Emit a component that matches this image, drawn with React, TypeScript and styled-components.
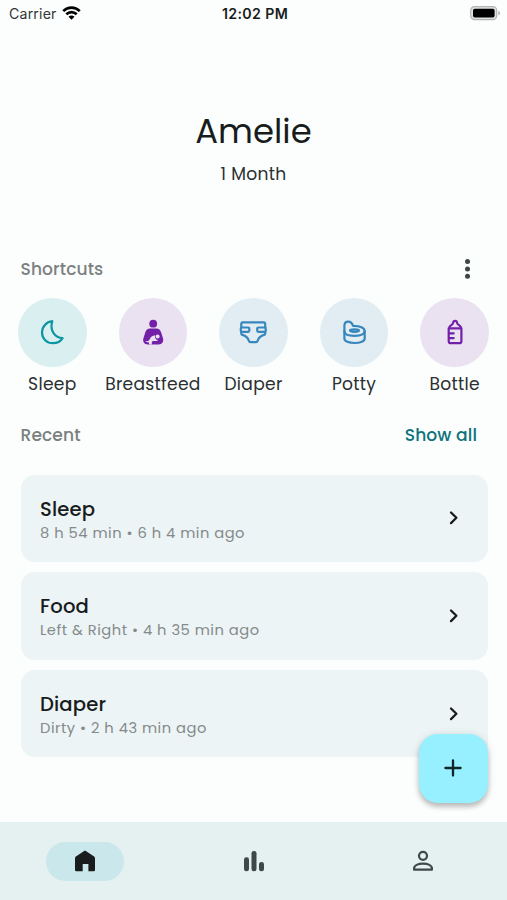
import React from "react";
import styled, { createGlobalStyle } from "styled-components";

const GlobalStyle = createGlobalStyle`
  * { box-sizing: border-box; }
  body {
    margin: 0;
    background: #fbfefd;
    font-family: Poppins, Inter, "Open Sans", sans-serif;
  }
`;

const Text = styled.span<{
  $size: number;
  $line: number;
  $spacing?: number;
  $weight?: number;
  $color?: string;
}>`
  display: block;
  white-space: nowrap;
  font-size: ${(p) => p.$size}px;
  line-height: ${(p) => p.$line}px;
  letter-spacing: ${(p) => p.$spacing ?? 0}px;
  font-weight: ${(p) => p.$weight ?? 400};
  color: ${(p) => p.$color ?? "#191c1d"};
`;

const Screen = styled.div`
  width: 507px;
  height: 900px;
  display: flex;
  flex-direction: column;
  overflow: hidden;
  background: #fbfefd;
`;

const StatusBar = styled.header`
  height: 28px;
  flex: none;
  display: grid;
  grid-template-columns: 1fr auto 1fr;
  align-items: center;
  padding: 0 6px 1px 9px;
  font-family: Inter, sans-serif;
`;

const Carrier = styled.div`
  display: flex;
  align-items: center;
  gap: 5px;
`;

const BatterySlot = styled.div`
  display: flex;
  justify-content: flex-end;
`;

const Profile = styled.section`
  height: 222px;
  flex: none;
  display: flex;
  flex-direction: column;
  align-items: center;
  padding-top: 82px;
`;

const SectionHead = styled.div`
  height: 38px;
  flex: none;
  display: flex;
  align-items: center;
  justify-content: space-between;
  padding: 0 30px 0 20.5px;
`;

const PlainButton = styled.button`
  border: 0;
  padding: 0;
  background: none;
  font: inherit;
  display: flex;
`;

const Shortcuts = styled.div`
  flex: none;
  height: 128px;
  display: grid;
  grid-template-columns: repeat(5, 1fr);
  padding: 10px 2px 0;
`;

const Shortcut = styled.div`
  display: flex;
  flex-direction: column;
  align-items: center;
  gap: 5px;
`;

const Bubble = styled.div<{ $bg: string; $fg: string }>`
  width: 68.6px;
  height: 68.6px;
  border-radius: 50%;
  display: flex;
  align-items: center;
  justify-content: center;
  background: ${(p) => p.$bg};
  color: ${(p) => p.$fg};
`;

const Cards = styled.div`
  flex: 1;
  display: flex;
  flex-direction: column;
  gap: 10.3px;
  padding: 20.5px 19.5px 0 20.5px;
`;

const Card = styled.article`
  height: 87.4px;
  flex: none;
  border-radius: 14px;
  background: #ecf4f5;
  display: flex;
  align-items: center;
  justify-content: space-between;
  padding: 0 28px 0 19.5px;
`;

const CardText = styled.div`
  padding-top: 4px;
`;

const BottomNav = styled.nav`
  position: relative;
  height: 78px;
  flex: none;
  background: #e5f0f0;
  display: grid;
  grid-template-columns: repeat(3, 1fr);
  align-items: center;
  justify-items: center;
`;

const NavPill = styled.div<{ $active?: boolean }>`
  width: 78px;
  height: 39px;
  border-radius: 20px;
  display: flex;
  align-items: center;
  justify-content: center;
  background: ${(p) => (p.$active ? "#cae7eb" : "transparent")};
`;

const Fab = styled.button`
  position: absolute;
  right: 19.5px;
  bottom: 97.5px;
  width: 69px;
  height: 69px;
  border: 0;
  padding: 0;
  border-radius: 19px;
  background: #97f0ff;
  box-shadow: 0 4px 5px rgba(0, 0, 0, 0.2), 0 1px 8px rgba(0, 0, 0, 0.13);
  display: flex;
  align-items: center;
  justify-content: center;
`;

const Line = styled.svg`
  display: block;
  fill: none;
  stroke: currentColor;
  stroke-linecap: round;
  stroke-linejoin: round;
`;

const WifiIcon = () => (
  <svg width="19" height="15" viewBox="0 0 19 15" fill="none" stroke="#000" strokeWidth="2.6">
    <path d="M1.2 5.1C6 .4 13 .4 17.8 5.1" />
    <path d="M4.3 8.300c3-2.900 7.400-2.900 10.400 0" />
    <path d="M9.500 13.800 6.500 10.800c1.800-1.600 4.200-1.600 6 0Z" fill="#000" stroke="none" />
  </svg>
);

const BatteryIcon = () => (
  <svg width="31" height="15" viewBox="0 0 31 15">
    <rect x=".7" y=".6" width="26" height="13" rx="3.800" fill="#dfe2e1" stroke="#b2b5b4" strokeWidth="1.2" />
    <rect x="3" y="2.700" width="21.600" height="8.800" rx="1.800" fill="#000" />
    <path d="M28.300 4.900c2.400.7 2.400 3.700 0 4.400Z" fill="#b2b5b4" />
  </svg>
);

const MoonIcon = () => (
  <Line width="68" height="68" viewBox="0 0 68 68" strokeWidth="2.2">
    <path d="M34.300 23.200C28.300 23.800 24 28.700 24 34.500 24 40.800 28.800 45.200 34.900 45.200c4.300 0 7.700-1.700 9.700-5.100C37.200 39.800 31.300 32.700 34.300 23.200Z" />
  </Line>
);

const BreastfeedIcon = ({ bg }: { bg: string }) => (
  <svg width="68" height="68" viewBox="0 0 68 68" fill="currentColor">
    <circle cx="34.200" cy="25.700" r="3.900" />
    <path d="M31 30.600h6.400c2.500 0 3.900 1.400 4.700 3.700l1.800 5.700c1.100 3.500-.6 6.400-4.300 6.400H28.800c-3.700 0-5.400-2.900-4.300-6.400l1.800-5.700c.8-2.300 2.200-3.700 4.700-3.700Z" />
    <circle cx="38.600" cy="38.400" r="2" fill={bg} />
    <path d="M36.100 37.300c-.5 2.600.5 4.400 2.900 4.900-1.500 1.100-3.300.9-4.800.9-1.200 0-1.700.9-1.300 3.400h-2.500l-.9-2.500c-1 .5-2.400.2-3.400-.6 2.700 0 4-.8 4.800-2.500.8-1.800 2.300-3.100 5.200-3.600Z" fill={bg} />
  </svg>
);

const DiaperIcon = () => (
  <Line width="68" height="68" viewBox="0 0 68 68" strokeWidth="2.200">
    <path d="M22.300 29.300v-3.500a1.500 1.500 0 0 1 1.500-1.500h20.900a1.500 1.500 0 0 1 1.500 1.500v3.500" />
    <path d="M22.600 29.500h6.500a1.200 1.200 0 0 1 1.200 1.200v1.900a1.200 1.200 0 0 1-1.200 1.200h-6.500a.8.8 0 0 1-.8-.8v-2.700a.8.8 0 0 1 .8-.8ZM45.900 29.500h-6.500a1.200 1.200 0 0 0-1.200 1.200v1.900a1.200 1.200 0 0 0 1.200 1.200h6.500a.8.8 0 0 0 .8-.8v-2.700a.8.8 0 0 0-.8-.8Z" />
    <path d="M22.300 33.900v1.500c0 .8.400 1.300 1.100 1.500 3.400 1 5.500 2.700 6.400 5.800.3.900.8 1.500 1.700 1.500h5.500c.9 0 1.400-.6 1.700-1.500.9-3.100 3-4.800 6.400-5.800.7-.2 1.100-.7 1.100-1.500v-1.500" />
  </Line>
);

const PottyIcon = () => (
  <Line width="68" height="68" viewBox="0 0 68 68" strokeWidth="2.200">
    <path d="M24.400 33.200v-5.300c0-2.800 1.600-4.300 3.900-4.300 2.600 0 4 2 4.800 4.300 7 .2 11.600 2.100 11.600 5.200 0 3-4.500 4.700-10.100 4.700s-10.200-1.600-10.200-4.600" />
    <path d="M24.400 33.200v7.500c0 2.600 4.400 4.300 10.200 4.300s10.100-1.900 10.100-4.500v-7.500" />
    <ellipse cx="34.500" cy="32.600" rx="4.500" ry="1.300" />
  </Line>
);

const BottleIcon = () => (
  <Line width="68" height="68" viewBox="0 0 68 68" strokeWidth="2.200">
    <path d="M27.700 30.300h12.700v12.900a2 2 0 0 1-2 2h-8.700a2 2 0 0 1-2-2ZM28.100 30c0-2.600 3.900-3 4-5 .1-1.100.8-2.100 2-2.100s1.900 1 2 2.100c.1 2 4 2.400 4 5M28 35.300h4.700M28 40.100h4.700" />
  </Line>
);

const ChevronIcon = () => (
  <Line width="12" height="16" viewBox="0 0 12 16" strokeWidth="2.300" color="#191c1d">
    <path d="m3 2.500 5.400 5.300L3 13.100" />
  </Line>
);

const MoreIcon = () => (
  <svg width="19" height="22" viewBox="0 0 19 22" fill="#3f4546">
    <circle cx="9.500" cy="3.600" r="2.500" />
    <circle cx="9.500" cy="11" r="2.500" />
    <circle cx="9.500" cy="18.300" r="2.500" />
  </svg>
);

const HomeIcon = () => (
  <svg width="22" height="22" viewBox="0 0 22 22">
    <path
      d="M1 8.500c0-.8.300-1.400.9-1.900L9.800 1.200c.9-.6 1.500-.6 2.400 0L20.100 6.600c.6.500.9 1.100.9 1.900v11.600c0 .7-.4 1.100-1.100 1.100h-5.500v-7.300H8.700v7.300H2.100c-.7 0-1.100-.4-1.100-1.100Z"
      fill="#191c1d"
    />
  </svg>
);

const ChartIcon = () => (
  <svg width="22" height="22" viewBox="0 0 22 22" fill="#3f4849">
    <rect x="1" y="7.200" width="5" height="14" rx="2.300" />
    <rect x="8.500" y="1" width="5" height="20.200" rx="2.300" />
    <rect x="16" y="12" width="5" height="9.200" rx="2.300" />
  </svg>
);

const PersonIcon = () => (
  <Line width="22" height="22" viewBox="0 0 22 22" strokeWidth="2.200" color="#3f4849">
    <circle cx="11" cy="5.800" r="4" />
    <path d="M2.100 19.700v-1.300c0-2.900 4-4.700 8.900-4.700s8.900 1.800 8.900 4.700v1.300Z" />
  </Line>
);

const shortcuts = [
  { name: "Sleep", bg: "#daf0f0", fg: "#0b96a2", icon: <MoonIcon /> },
  { name: "Breastfeed", bg: "#ebe2f1", fg: "#7320a8", icon: <BreastfeedIcon bg="#ebe2f1" /> },
  { name: "Diaper", bg: "#e2edf3", fg: "#3787bd", icon: <DiaperIcon /> },
  { name: "Potty", bg: "#e2edf3", fg: "#3787bd", icon: <PottyIcon /> },
  { name: "Bottle", bg: "#ebe2f1", fg: "#7320a8", icon: <BottleIcon /> },
];

const recent = [
  { name: "Sleep", detail: "8 h 54 min • 6 h 4 min ago" },
  { name: "Food", detail: "Left & Right • 4 h 35 min ago" },
  { name: "Diaper", detail: "Dirty • 2 h 43 min ago" },
];

export default function App() {
  return (
    <>
      <GlobalStyle />
      <Screen>
        <StatusBar>
          <Carrier>
            <Text $size={14.2} $line={20} $spacing={0.15} $color="#333536">Carrier</Text>
            <WifiIcon />
          </Carrier>
          <Text $size={14.2} $line={20} $weight={600} $spacing={0.35}>12:02 PM</Text>
          <BatterySlot><BatteryIcon /></BatterySlot>
        </StatusBar>
        <Profile>
          <Text $size={33.9} $line={42}>Amelie</Text>
          <Text $size={17.1} $line={44} $spacing={0.3} $color="#2c2f30">1 Month</Text>
        </Profile>
        <SectionHead>
          <Text $size={17.1} $line={24} $weight={500} $spacing={0.08} $color="#7b8081">Shortcuts</Text>
          <PlainButton aria-label="More"><MoreIcon /></PlainButton>
        </SectionHead>
        <Shortcuts>
          {shortcuts.map((s) => (
            <Shortcut key={s.name}>
              <Bubble $bg={s.bg} $fg={s.fg}>{s.icon}</Bubble>
              <Text $size={17.1} $line={24} $spacing={0.3} $color="#2c2f30">{s.name}</Text>
            </Shortcut>
          ))}
        </Shortcuts>
        <SectionHead>
          <Text $size={17.1} $line={24} $weight={500} $spacing={0.08} $color="#7b8081">Recent</Text>
          <PlainButton>
            <Text $size={17.1} $line={24} $weight={500} $spacing={0.1} $color="#0d727c">Show all</Text>
          </PlainButton>
        </SectionHead>
        <Cards>
          {recent.map((r) => (
            <Card key={r.name}>
              <CardText>
                <Text $size={19.6} $line={25} $weight={500} $spacing={0.15}>{r.name}</Text>
                <Text $size={14.7} $line={22} $spacing={0.5} $color="#848a8b">{r.detail}</Text>
              </CardText>
              <ChevronIcon />
            </Card>
          ))}
        </Cards>
        <BottomNav>
          <NavPill $active><HomeIcon /></NavPill>
          <NavPill><ChartIcon /></NavPill>
          <NavPill><PersonIcon /></NavPill>
          <Fab aria-label="Add">
            <Line width="20" height="20" viewBox="0 0 20 20" strokeWidth="2.300" color="#10262a">
              <path d="M10 2.400v15.200M2.400 10h15.200" />
            </Line>
          </Fab>
        </BottomNav>
      </Screen>
    </>
  );
}
